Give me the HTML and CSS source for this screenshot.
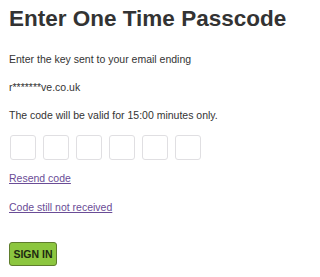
FILE: index.html
```html
<!DOCTYPE html>
<html lang="en">
<head>
<meta charset="utf-8">
<title>Enter One Time Passcode</title>
<link rel="stylesheet" href="styles.css">
</head>
<body>
<main class="page">
  <h1 class="title">Enter One Time Passcode</h1>
  <p class="text text-first">Enter the key sent to your email ending</p>
  <p class="text">r*******ve.co.uk</p>
  <p class="text">The code will be valid for 15:00 minutes only.</p>
  <div class="code-row">
    <input class="code-box" type="text" maxlength="1" aria-label="Digit 1">
    <input class="code-box" type="text" maxlength="1" aria-label="Digit 2">
    <input class="code-box" type="text" maxlength="1" aria-label="Digit 3">
    <input class="code-box" type="text" maxlength="1" aria-label="Digit 4">
    <input class="code-box" type="text" maxlength="1" aria-label="Digit 5">
    <input class="code-box" type="text" maxlength="1" aria-label="Digit 6">
  </div>
  <p class="link-line link-first"><a class="link" href="#">Resend code</a></p>
  <p class="link-line link-second"><a class="link" href="#">Code still not received</a></p>
  <div class="actions">
    <button class="btn-signin" type="button">SIGN IN</button>
  </div>
</main>
</body>
</html>
```

FILE: styles.css
```css
html, body {
  margin: 0;
  padding: 0;
  background: #ffffff;
}

body {
  font-family: "Liberation Sans", Arial, sans-serif;
  color: #333333;
}

.page {
  padding: 0 9px;
}

.title {
  margin: 0;
  padding-top: 5px;
  font-size: 22.5px;
  line-height: 28px;
  font-weight: bold;
  color: #333333;
}

.text {
  margin: 12px 0 0;
  font-size: 10.5px;
  line-height: 16px;
  color: #333333;
}

.text-first {
  margin-top: 18px;
}

.code-row {
  display: flex;
  gap: 7px;
  margin-top: 12px;
  padding-left: 1px;
}

.code-box {
  box-sizing: border-box;
  width: 26px;
  height: 25px;
  margin: 0;
  padding: 0;
  border: 1px solid #e0dfe2;
  border-radius: 3px;
  background: #ffffff;
  font-family: inherit;
  font-size: 12px;
  text-align: center;
  outline: none;
}

.link-line {
  margin: 0;
  font-size: 10.5px;
  line-height: 16px;
}

.link-first {
  margin-top: 10px;
}

.link-second {
  margin-top: 13px;
}

.link {
  color: #6a4c96;
  text-decoration: underline;
}

.actions {
  margin-top: 27px;
}

.btn-signin {
  box-sizing: border-box;
  width: 48px;
  height: 24px;
  margin: 0;
  padding: 0;
  border: 1px solid #5f7d2c;
  border-radius: 3px;
  background: #8cc63f;
  color: #1d2a10;
  font-family: "Liberation Sans", Arial, sans-serif;
  font-size: 10.5px;
  font-weight: bold;
  line-height: 22px;
  text-align: center;
  cursor: pointer;
}
```
